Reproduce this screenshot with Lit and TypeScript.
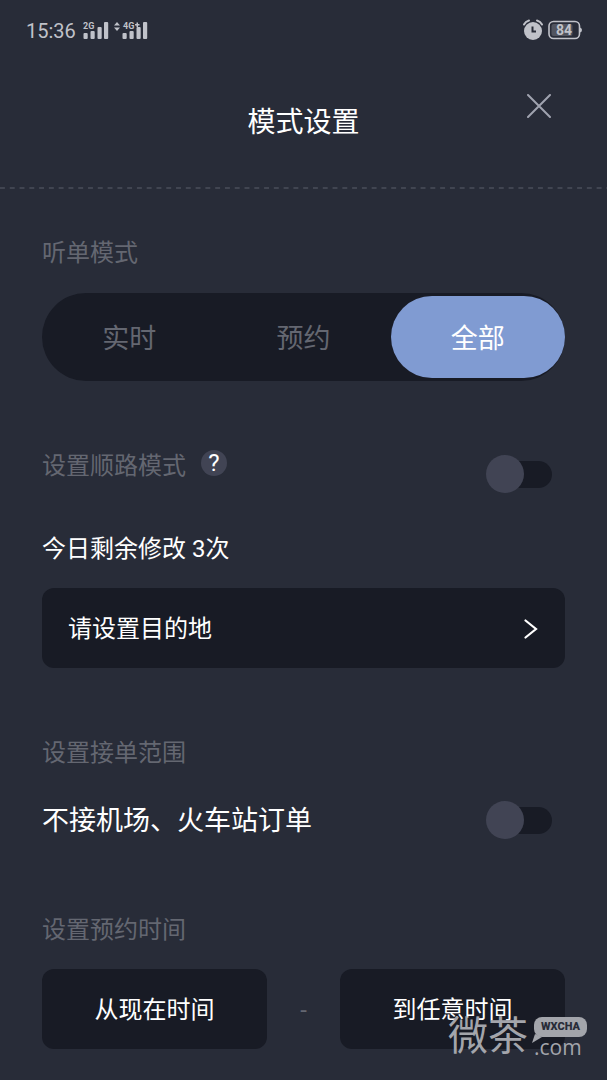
import { LitElement, html, css, svg } from "lit";
import { customElement, property, state } from "lit/decorators.js";

@customElement("status-bar")
class StatusBar extends LitElement {
  static styles = css`
    :host {
      display: flex;
      align-items: center;
      justify-content: space-between;
      height: 60px;
      padding: 0 25px 0 26px;
      color: #c0c2c9;
    }
    .side {
      display: flex;
      align-items: center;
      gap: 5px;
    }
    .time {
      font-size: 20px;
      line-height: 24px;
      margin-top: 2px;
    }
    svg {
      display: block;
    }
    .signal {
      margin-top: 2px;
    }
    .net {
      font: 700 9px Roboto, sans-serif;
    }
    .level {
      font: 700 14px Roboto, sans-serif;
    }
  `;

  private bars(x: number) {
    return svg`
      <rect x=${x} y="12" width="4.200" height="6" rx="1" />
      <rect x=${x + 7} y="10" width="4.200" height="8" rx="1" />
      <rect x=${x + 14} y="6" width="4.200" height="12" rx="1" />
      <rect x=${x + 20.5} y="1" width="4.200" height="17" rx="1" />`;
  }

  render() {
    return html`
      <div class="side">
        <span class="time">15:36</span>
        <svg class="signal" width="68" height="20" viewBox="0 0 68 20" fill="currentColor" aria-label="信号">
          ${this.bars(2.5)} ${this.bars(41.5)}
          <text class="net" x="2" y="8">2G</text>
          <path d="M33 4.500l3-3.500 3 3.500zM33 6.500l3 3.500 3-3.500z" />
          <text class="net" x="42" y="8">4G</text>
          <path d="M54 3h1.500V1.500h1.500V3H58.500v1.500H57V6h-1.500V4.500H54z" />
        </svg>
      </div>
      <div class="side">
        <svg width="20" height="22" viewBox="0 0 20 22" fill="none" aria-label="闹钟">
          <circle cx="10" cy="12" r="9" fill="currentColor" />
          <path d="M1 5.500Q2.500 2.500 6 1.500M19 5.500Q17.500 2.500 14 1.500" stroke="currentColor" stroke-width="2" stroke-linecap="round" />
          <path d="M9.500 7.500v5H13" stroke="#282c38" stroke-width="2" />
        </svg>
        <svg width="34" height="20" viewBox="0 0 34 20" aria-label="电量">
          <rect x="1" y="1.500" width="30.500" height="17" rx="4.500" fill="none" stroke="currentColor" stroke-width="1.600" />
          <rect x="3.500" y="4" width="21" height="12" rx="2" fill="#51545f" />
          <path d="M32 7.500q2 .5 2 2.500t-2 2.500z" fill="currentColor" />
          <text class="level" x="16" y="15" text-anchor="middle" fill="currentColor">84</text>
        </svg>
      </div>
    `;
  }
}

@customElement("mode-tabs")
class ModeTabs extends LitElement {
  @property({ type: Array }) options: string[] = [];
  @property() value = "";

  static styles = css`
    :host {
      display: block;
    }
    .track {
      display: grid;
      grid-auto-flow: column;
      grid-auto-columns: 1fr;
      margin: 0;
      padding: 3px 0;
      border: 0;
      border-radius: 44px;
      background: #181b25;
    }
    .tab {
      display: flex;
      justify-content: center;
      align-items: center;
      box-sizing: border-box;
      height: 82px;
      padding-bottom: 2px;
      border-radius: 41px;
      font-size: 27px;
      color: #646771;
      cursor: pointer;
    }
    .tab:has(.radio:checked) {
      background: #809bd2;
      color: #fff;
    }
    .radio {
      appearance: none;
      width: 0;
      height: 0;
      margin: 0;
    }
  `;

  render() {
    return html`
      <fieldset class="track" aria-label="听单模式">
        ${this.options.map(
          (o) => html`<label class="tab"
            ><input class="radio" type="radio" name="mode" .value=${o} .checked=${o === this.value} @change=${() => (this.value = o)} />${o}</label
          >`
        )}
      </fieldset>
    `;
  }
}

@customElement("site-mark")
class SiteMark extends LitElement {
  static styles = css`
    :host {
      display: flex;
      align-items: flex-start;
      gap: 6px;
      color: #a3a5ab;
      pointer-events: none;
    }
    .name {
      font-size: 40px;
      line-height: 40px;
    }
    .side {
      display: flex;
      flex-direction: column;
      align-items: flex-start;
    }
    .bubble {
      position: relative;
      padding: 0 7px;
      border-radius: 8px;
      background: #a3a5ab;
      color: #282c38;
      font: 900 11px/20px Roboto, sans-serif;
    }
    .tail {
      position: absolute;
      left: -2px;
      top: 17px;
    }
    .com {
      font: 21px/20px "Open Sans", sans-serif;
    }
  `;

  render() {
    return html`
      <span class="name">微茶</span>
      <span class="side">
        <span class="bubble"
          >WXCHA<svg class="tail" width="10" height="9" viewBox="0 0 10 9" fill="#a3a5ab"><path d="M3 0L0 9l10-6z" /></svg
        ></span>
        <span class="com">.com</span>
      </span>
    `;
  }
}

@customElement("app-root")
class AppRoot extends LitElement {
  @state() private onTheWay = false;
  @state() private skipStations = false;

  static styles = css`
    :host {
      display: block;
      position: relative;
      box-sizing: border-box;
      min-height: 100vh;
      background: #282c38;
      color: #fff;
      font-family: Roboto, "Noto Sans CJK SC", sans-serif;
    }
    .header {
      display: grid;
      grid-template-columns: 1fr auto 1fr;
      align-items: start;
      padding: 34px 56px 44px;
    }
    .title {
      grid-column: 2;
      margin: 9px 0 0;
      font-size: 28px;
      font-weight: 400;
      line-height: 40px;
    }
    button {
      border: 0;
      font-family: inherit;
      color: inherit;
      cursor: pointer;
    }
    .close {
      justify-self: end;
      padding: 0;
      background: none;
      color: #a0a3af;
    }
    svg {
      display: block;
    }
    .divider {
      height: 2px;
      background: linear-gradient(90deg, #414551 50%, transparent 50%) 0 0 / calc(100% / 62) 2px repeat-x;
    }
    .content {
      padding: 48px 42px 31px;
    }
    .section + .section {
      margin-top: 69px;
    }
    .label {
      margin: 0;
      font-size: 24px;
      font-weight: 400;
      line-height: 32px;
      color: #646771;
    }
    .tabs {
      margin-top: 24px;
    }
    .row {
      display: flex;
      align-items: flex-start;
      justify-content: space-between;
      padding-right: 13px;
    }
    .with-help {
      display: flex;
      gap: 15px;
    }
    .help {
      width: 26px;
      height: 26px;
      padding: 0;
      border-radius: 50%;
      background: #414454;
      font-size: 24px;
      font-weight: 400;
      line-height: 26px;
    }
    .switch {
      appearance: none;
      display: grid;
      align-items: center;
      width: 66px;
      height: 38px;
      margin: 0;
      cursor: pointer;
    }
    .switch::before,
    .switch::after {
      content: "";
      grid-area: 1 / 1;
    }
    .switch::before {
      height: 27px;
      margin-left: 4px;
      border-radius: 14px;
      background: #181b25;
    }
    .switch::after {
      width: 38px;
      height: 38px;
      border-radius: 50%;
      background: #414454;
    }
    .switch:checked::after {
      justify-self: end;
      background: #809bd2;
    }
    .low {
      margin-top: 5px;
    }
    .remaining {
      margin: 40px 0 23px;
      font-size: 24px;
      line-height: 32px;
    }
    .field {
      height: 80px;
      padding: 2px 0 0;
      border-radius: 12px;
      background: #181b25;
      font-size: 24px;
      line-height: 32px;
    }
    .destination {
      display: flex;
      align-items: center;
      justify-content: space-between;
      width: 100%;
      padding: 2px 26px 0;
    }
    .range {
      align-items: center;
      margin-top: 32px;
    }
    .range-text {
      font-size: 27px;
      line-height: 36px;
      padding-top: 2px;
    }
    .section + .booking {
      margin-top: 75px;
    }
    .times {
      display: grid;
      grid-template-columns: 1fr 73px 1fr;
      align-items: center;
      margin-top: 23px;
    }
    .dash {
      padding-top: 2px;
      text-align: center;
      font-size: 24px;
      color: #646771;
    }
    .mark {
      position: absolute;
      right: 20px;
      bottom: 23px;
    }
  `;

  render() {
    return html`
      <status-bar></status-bar>
      <header class="header">
        <h1 class="title">模式设置</h1>
        <button class="close" aria-label="关闭">
          <svg width="24" height="24" viewBox="0 0 24 24" fill="none" stroke="currentColor" stroke-width="2" stroke-linecap="round">
            <path d="M1 1l22 22M23 1L1 23" />
          </svg>
        </button>
      </header>
      <div class="divider"></div>
      <main class="content">
        <section class="section">
          <h2 class="label">听单模式</h2>
          <mode-tabs class="tabs" .options=${["实时", "预约", "全部"]} value="全部"></mode-tabs>
        </section>
        <section class="section">
          <div class="row">
            <div class="with-help">
              <label class="label" for="way">设置顺路模式</label>
              <button class="help" aria-label="帮助">?</button>
            </div>
            <input id="way" class="switch low" type="checkbox" role="switch" .checked=${this.onTheWay} @change=${() => (this.onTheWay = !this.onTheWay)} />
          </div>
          <p class="remaining">今日剩余修改 3次</p>
          <button class="field destination">
            请设置目的地
            <svg width="16" height="20" viewBox="0 0 16 20" fill="none" stroke="currentColor" stroke-width="2.200" stroke-linecap="round">
              <path d="M2.500 1.500l10.500 8.500-10.500 8.500" />
            </svg>
          </button>
        </section>
        <section class="section">
          <h2 class="label">设置接单范围</h2>
          <div class="row range">
            <label class="range-text" for="stations">不接机场、火车站订单</label>
            <input id="stations" class="switch" type="checkbox" role="switch" .checked=${this.skipStations} @change=${() => (this.skipStations = !this.skipStations)} />
          </div>
        </section>
        <section class="section booking">
          <h2 class="label">设置预约时间</h2>
          <div class="times">
            <button class="field">从现在时间</button>
            <span class="dash">-</span>
            <button class="field">到任意时间</button>
          </div>
        </section>
      </main>
      <site-mark class="mark"></site-mark>
    `;
  }
}
